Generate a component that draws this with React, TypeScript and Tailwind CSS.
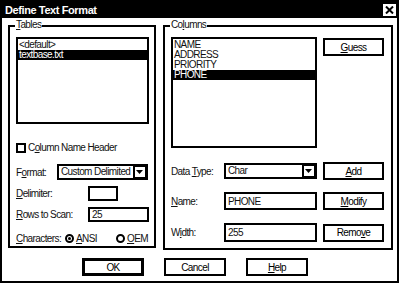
import type { ReactNode } from 'react'

const FONT = { fontFamily: '"Liberation Sans", Arial, sans-serif' }

function U({ children }: { children: ReactNode }) {
  return <span className="underline underline-offset-[1px]">{children}</span>
}

function Btn({ children, w = 'w-[62px]', def = false }: { children: ReactNode; w?: string; def?: boolean }) {
  return (
    <div
      className={`${w} h-[18px] flex items-center justify-center bg-white text-[10px] text-black ${
        def ? 'border-[3px] border-black' : 'border-2 border-black'
      }`}
    >
      {children}
    </div>
  )
}

function DropArrow() {
  return (
    <div className="w-[13px] h-full bg-black flex items-center justify-center">
      <div className="w-[10px] h-[10px] bg-white flex items-center justify-center">
        <svg width="7" height="4" viewBox="0 0 7 4">
          <path d="M0 0h7L3.5 4z" fill="#000" />
        </svg>
      </div>
    </div>
  )
}

function Combo({ value, w }: { value: string; w: string }) {
  return (
    <div className={`${w} h-[16px] border-2 border-black flex bg-white`}>
      <div className="flex-1 overflow-hidden whitespace-nowrap text-[10px] leading-[12px] pl-[2px]">{value}</div>
      <DropArrow />
    </div>
  )
}

function Field({ value, w, h = 'h-[18px]' }: { value: string; w: string; h?: string }) {
  return (
    <div className={`${w} ${h} border-2 border-black bg-white text-[10px] leading-[13px] pl-[2px] flex items-center`}>
      {value}
    </div>
  )
}

function Radio({ on }: { on: boolean }) {
  return (
    <div className="w-[9px] h-[9px] rounded-full border-2 border-black flex items-center justify-center">
      {on && <div className="w-[3px] h-[3px] rounded-full bg-black" />}
    </div>
  )
}

export default function App() {
  return (
    <div
      className="w-[399px] h-[283px] bg-white border-2 border-black text-[#111] tracking-[-0.6px] flex flex-col"
      style={FONT}
    >
      {/* title bar */}
      <div className="h-[16px] bg-black flex items-center justify-between pl-[3px] pr-[1px]">
        <span className="text-white font-bold text-[11px] tracking-[-0.4px]">Define Text Format</span>
        <div className="w-[13px] h-[12px] bg-white flex items-center justify-center">
          <svg width="9" height="8" viewBox="0 0 9 8">
            <path d="M1 0.5 8 7.5M8 0.5 1 7.5" stroke="#000" strokeWidth="2" />
          </svg>
        </div>
      </div>

      <div className="flex items-start pl-[6px] pt-[7px] gap-[7px]">
        {/* Tables group */}
        <div className="relative w-[148px] h-[223px] border-2 border-black flex flex-col pl-[6px]">
          <span className="absolute -top-[8px] left-[5px] bg-white px-[1px] text-[10px] leading-[12px]">
            <U>T</U>ables
          </span>
          <div className="mt-[10px] w-[133px] h-[88px] border-2 border-black text-[10px] leading-[10px] pt-[1px]">
            <div className="pl-[1px] h-[10px]">&lt;default&gt;</div>
            <div className="pl-[1px] h-[10px] bg-black text-white">textbase.txt</div>
          </div>
          <div className="mt-[16px] flex items-center gap-[2px] text-[10px]">
            <div className="w-[10px] h-[10px] border-2 border-black" />
            <span>C<U>o</U>lumn Name Header</span>
          </div>
          <div className="mt-[9px] flex items-center text-[10px]">
            <span className="w-[41px]">F<U>o</U>rmat:</span>
            <Combo value="Custom Delimited" w="w-[91px]" />
          </div>
          <div className="mt-[6px] flex items-center text-[10px]">
            <span className="w-[72px]"><U>D</U>elimiter:</span>
            <Field value="" w="w-[30px]" h="h-[15px]" />
          </div>
          <div className="mt-[6px] flex items-center text-[10px]">
            <span className="w-[72px]"><U>R</U>ows to Scan:</span>
            <Field value="25" w="w-[61px]" h="h-[15px]" />
          </div>
          <div className="mt-[9px] flex items-center text-[10px]">
            <span className="w-[49px]"><U>C</U>haracters:</span>
            <Radio on />
            <span className="ml-[2px] w-[40px]"><U>A</U>NSI</span>
            <Radio on={false} />
            <span className="ml-[2px]"><U>O</U>EM</span>
          </div>
        </div>

        {/* Columns group */}
        <div className="relative w-[230px] h-[225px] border-2 border-black flex flex-col pl-[6px]">
          <span className="absolute -top-[8px] left-[5px] bg-white px-[1px] text-[10px] leading-[12px]">
            Co<U>l</U>umns
          </span>
          <div className="mt-[10px] flex items-start gap-[6px]">
            <div className="w-[146px] h-[111px] border-2 border-black text-[10px] leading-[10px] pt-[1px]">
              <div className="pl-[1px] h-[10px]">NAME</div>
              <div className="pl-[1px] h-[10px]">ADDRESS</div>
              <div className="pl-[1px] h-[10px]">PRIORITY</div>
              <div className="pl-[1px] h-[10px] bg-black text-white">PHONE</div>
            </div>
            <div className="mt-[1px]">
              <Btn w="w-[61px]"><U>G</U>uess</Btn>
            </div>
          </div>
          <div className="mt-[14px] flex items-center text-[10px]">
            <span className="w-[53px]">Data <U>T</U>ype:</span>
            <Combo value="Char" w="w-[93px]" />
            <div className="ml-[6px]">
              <Btn w="w-[61px]"><U>A</U>dd</Btn>
            </div>
          </div>
          <div className="mt-[12px] flex items-center text-[10px]">
            <span className="w-[53px]"><U>N</U>ame:</span>
            <Field value="PHONE" w="w-[93px]" />
            <div className="ml-[6px]">
              <Btn w="w-[61px]"><U>M</U>odify</Btn>
            </div>
          </div>
          <div className="mt-[13px] flex items-center text-[10px]">
            <span className="w-[53px]">W<U>i</U>dth:</span>
            <Field value="255" w="w-[93px]" h="h-[19px]" />
            <div className="ml-[6px]">
              <Btn w="w-[61px]">Remo<U>v</U>e</Btn>
            </div>
          </div>
        </div>
      </div>

      <div className="mt-[8px] flex pl-[80px] gap-[20px]">
        <Btn def>OK</Btn>
        <Btn>Cancel</Btn>
        <Btn><U>H</U>elp</Btn>
      </div>
    </div>
  )
}
